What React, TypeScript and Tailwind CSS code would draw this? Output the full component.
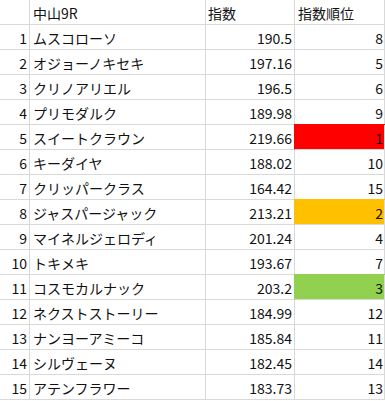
const rows: [string, string, number][] = [
  ["ムスコローソ", "190.5", 8],
  ["オジョーノキセキ", "197.16", 5],
  ["クリノアリエル", "196.5", 6],
  ["プリモダルク", "189.98", 9],
  ["スイートクラウン", "219.66", 1],
  ["キーダイヤ", "188.02", 10],
  ["クリッパークラス", "164.42", 15],
  ["ジャスパージャック", "213.21", 2],
  ["マイネルジェロディ", "201.24", 4],
  ["トキメキ", "193.67", 7],
  ["コスモカルナック", "203.2", 3],
  ["ネクストストーリー", "184.99", 12],
  ["ナンヨーアミーコ", "185.84", 11],
  ["シルヴェーヌ", "182.45", 14],
  ["アテンフラワー", "183.73", 13],
];

const rankFill: Record<number, string> = {
  1: "bg-[#ff0000] border-l-[#ff0000] shadow-[0_-1px_0_#ff0000]",
  2: "bg-[#ffc000] border-l-[#ffc000] shadow-[0_-1px_0_#ffc000]",
  3: "bg-[#92d050] border-l-[#92d050] shadow-[0_-1px_0_#92d050]",
};

export default function App() {
  return (
    <div
      className="w-[385px] h-[401px] bg-white text-[14px] text-[#111] leading-none"
      style={{ fontFamily: '"Noto Sans CJK JP", "Noto Sans", sans-serif' }}
    >
      <div className="grid grid-cols-[29px_176px_89px_91px]">
        <div className="h-[25px] border-b border-[#d9d9d9]" />
        <div className="h-[25px] border-b border-l border-[#d9d9d9] flex items-center pl-[3px] pt-px">
          中山9R
        </div>
        <div className="h-[25px] border-b border-l border-[#d9d9d9] flex items-center pl-[2px] pt-px">
          指数
        </div>
        <div className="h-[25px] border-b border-l border-r border-[#d9d9d9] flex items-center pl-[3px] pt-px">
          指数順位
        </div>
        {rows.map(([name, score, rank], i) => (
          <Row key={i} n={i + 1} name={name} score={score} rank={rank} />
        ))}
      </div>
    </div>
  );
}

function Row({ n, name, score, rank }: { n: number; name: string; score: string; rank: number }) {
  const fill = rankFill[rank] ?? "";
  return (
    <>
      <div className="h-[25px] border-b border-[#d9d9d9] flex items-center justify-end pr-[2px] pt-px">
        {n}
      </div>
      <div className="h-[25px] border-b border-l border-[#d9d9d9] flex items-center pl-[3px] pt-px whitespace-nowrap">
        {name}
      </div>
      <div className="h-[25px] border-b border-l border-[#d9d9d9] flex items-center justify-end pr-[2px] pt-px">
        {score}
      </div>
      <div
        className={`h-[25px] border-b border-l border-r border-[#d9d9d9] flex items-center justify-end pr-px pt-px ${fill}`}
      >
        {rank}
      </div>
    </>
  );
}
